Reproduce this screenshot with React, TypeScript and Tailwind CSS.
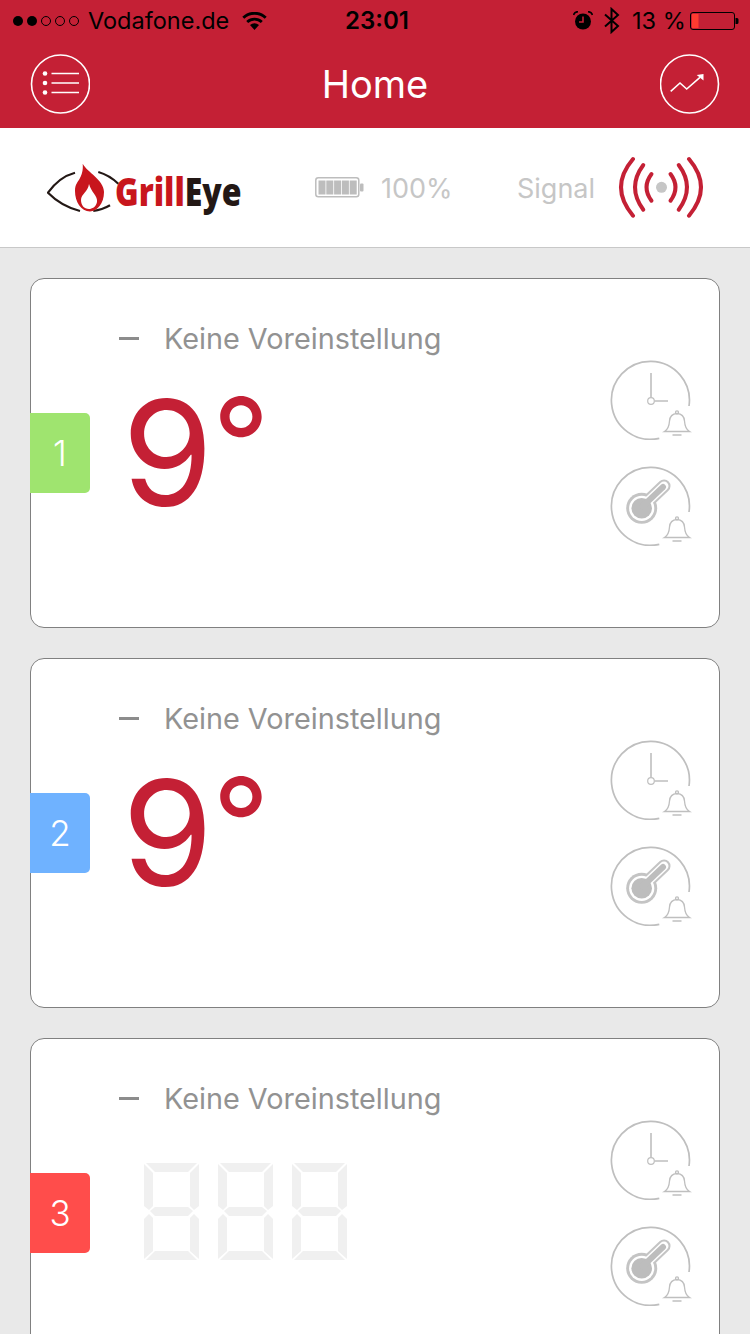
import React from "react";

const RED = "#c42035";
const GRAY = "#bdbdbd";

function Wifi() {
  return (
    <svg width="25" height="18" viewBox="0 0 25 18" className="ml-[13px]">
      <path d="M12.5 18 L8 13 A7 7 0 0 1 17 13 Z" fill="#000" />
      <path d="M5.2 10 A10.6 10.6 0 0 1 19.8 10" fill="none" stroke="#000" strokeWidth="2.8" />
      <path d="M1.3 5.8 A16 16 0 0 1 23.7 5.8" fill="none" stroke="#000" strokeWidth="2.8" />
    </svg>
  );
}

function Alarm() {
  return (
    <svg width="20" height="19" viewBox="0 0 20 19">
      <circle cx="10" cy="10.5" r="8" fill="#000" />
      <path d="M10 5.5V11H6" fill="none" stroke={RED} strokeWidth="1.6" />
      <path d="M0.5 4 Q1.5 0.8 5 0.6" fill="none" stroke="#000" strokeWidth="1.6" />
      <path d="M19.5 4 Q18.5 0.8 15 0.6" fill="none" stroke="#000" strokeWidth="1.6" />
    </svg>
  );
}

function Bluetooth() {
  return (
    <svg width="16" height="27" viewBox="0 0 16 27" className="ml-[11px]">
      <path d="M1 7.5 L14 19 L7.5 25 V2 L14 8 L1 19.5" fill="none" stroke="#000" strokeWidth="2" />
    </svg>
  );
}

function PhoneBattery() {
  return (
    <svg width="49" height="18" viewBox="0 0 49 18" className="ml-[7px]">
      <rect x="0.5" y="0.5" width="44" height="17" rx="2.5" fill="none" stroke="#000" />
      <rect x="2" y="2" width="6.5" height="14" fill="#ff3b30" />
      <path d="M45.5 6 H47 A1.5 1.5 0 0 1 48.5 7.5 V10.5 A1.5 1.5 0 0 1 47 12 H45.5 Z" fill="#000" />
    </svg>
  );
}

function StatusBar() {
  return (
    <div className="flex h-10 items-center pl-[13px] pt-[1px] text-black">
      <div className="flex w-[332px] items-center">
        <div className="flex items-center gap-[4px]">
          <span className="h-[10px] w-[10px] rounded-full bg-black" />
          <span className="h-[10px] w-[10px] rounded-full bg-black" />
          <span className="h-[10px] w-[10px] rounded-full border border-black" />
          <span className="h-[10px] w-[10px] rounded-full border border-black" />
          <span className="h-[10px] w-[10px] rounded-full border border-black" />
        </div>
        <span className="ml-[9px] text-[23.5px] leading-none">Vodafone.de</span>
        <Wifi />
      </div>
      <span className="w-[228px] text-[24px] font-semibold leading-none">23:01</span>
      <Alarm />
      <Bluetooth />
      <span className="ml-[12px] w-[51px] whitespace-nowrap text-[23.5px] leading-none">13 %</span>
      <PhoneBattery />
    </div>
  );
}

function NavBar() {
  return (
    <div className="flex h-[88px] items-center justify-between px-[30px]">
      <svg width="60" height="60" viewBox="0 0 60 60">
        <circle cx="30.5" cy="30" r="29" fill="none" stroke="#fff" strokeWidth="1.6" />
        <circle cx="15" cy="19.5" r="2.3" fill="#fff" />
        <circle cx="15" cy="29" r="2.3" fill="#fff" />
        <circle cx="15" cy="38.5" r="2.3" fill="#fff" />
        <path d="M21.5 19.5H49M21.5 29H49M21.5 38.5H49" stroke="#fff" strokeWidth="1.6" />
      </svg>
      <span className="text-[38px] leading-none text-white">Home</span>
      <svg width="60" height="60" viewBox="0 0 60 60">
        <circle cx="29.5" cy="30" r="29" fill="none" stroke="#fff" strokeWidth="1.6" />
        <path d="M10.7 37.3 L20 29 L26.7 35 L40 23.3" fill="none" stroke="#fff" strokeWidth="1.6" />
        <path d="M36.7 21 L43.5 20 L43.5 26.5 Z" fill="#fff" />
      </svg>
    </div>
  );
}

function Logo() {
  return (
    <div className="flex h-[56px] w-[193px] items-start">
      <svg width="75" height="52" viewBox="0 0 75 52" className="mt-[2px] shrink-0">
        <path d="M28 10.7 Q12 15 1 30.7 Q14 44 33 49 M51.3 10 Q62 13 71.3 21.7 M46.3 49 Q55 48 63 43.3" fill="none" stroke="#231815" strokeWidth="2.2" />
        <path d="M35.7 1.7 C40 10 57 18 57 30 C57 42 50 49 43 49.5 C34 49 28 40 28 29 C28 22 31 20 33 16 C36 10 36 6 35.7 1.7 Z" fill="#c8161d" />
        <path d="M42 22 C44 30 51 34 50 40 C49 45 45 47 42 47 C37 47 34 43 34 38 C34 32 41 30 42 22 Z" fill="#fff" />
      </svg>
      <span className="ml-[-7px] mt-[7px] origin-left scale-x-[0.82] whitespace-nowrap font-['Open_Sans',sans-serif] text-[39px] font-extrabold leading-[48px] text-[#231815]">
        <span className="text-[#c8161d]">Grill</span>Eye
      </span>
    </div>
  );
}

function DeviceBattery() {
  return (
    <svg width="49" height="21" viewBox="0 0 49 21">
      <rect x="0.8" y="0.8" width="43" height="19" rx="2.5" fill="none" stroke={GRAY} strokeWidth="1.5" />
      <rect x="3.5" y="3.5" width="7" height="14" fill={GRAY} />
      <rect x="11.3" y="3.5" width="7" height="14" fill={GRAY} />
      <rect x="19.1" y="3.5" width="7" height="14" fill={GRAY} />
      <rect x="26.9" y="3.5" width="7" height="14" fill={GRAY} />
      <rect x="34.7" y="3.5" width="7" height="14" fill={GRAY} />
      <rect x="45" y="6.5" width="3.5" height="8" rx="1" fill={GRAY} />
    </svg>
  );
}

function SignalIcon() {
  return (
    <svg width="90" height="64" viewBox="0 0 90 64">
      <circle cx="44.5" cy="31.3" r="5.5" fill="#c6c6c6" />
      <g fill="none" stroke={RED} strokeWidth="4" strokeLinecap="round">
        <path d="M34.5 18 Q24.5 31.3 34.5 44.7" />
        <path d="M26.3 9 Q9.7 31.3 26.3 53.7" />
        <path d="M16 3 Q-8 31.3 16 59.7" />
        <path d="M53.5 18 Q63.5 31.3 53.5 44.7" />
        <path d="M61.7 9 Q78.3 31.3 61.7 53.7" />
        <path d="M72 3 Q96 31.3 72 59.7" />
      </g>
    </svg>
  );
}

function Header() {
  return (
    <div className="flex h-[120px] shrink-0 items-center border-b border-[#c8c8c8] bg-white pl-[47px]">
      <Logo />
      <div className="ml-[75px]">
        <DeviceBattery />
      </div>
      <span className="ml-[17px] mt-[2px] w-[136px] text-[27px] leading-none text-[#c6c6c6]">100%</span>
      <span className="mt-[2px] text-[27px] leading-none text-[#c6c6c6]">Signal</span>
      <div className="ml-[22px]">
        <SignalIcon />
      </div>
    </div>
  );
}

function Bell() {
  return (
    <g fill="none" stroke="#bfbfbf" strokeWidth="1.3">
      <path d="M54.5 71.5 Q59 69 59.5 61 Q60 54 67 53.5 Q74 54 74.5 61 Q75 69 79.5 71.5 Z" />
      <circle cx="67" cy="52.3" r="1.5" />
      <path d="M62.5 75H71.5" strokeWidth="1.5" />
    </g>
  );
}

function ClockIcon() {
  return (
    <svg width="82" height="80" viewBox="0 0 82 80">
      <path d="M49.3 78.3 A39 39 0 1 1 79 46" fill="none" stroke="#bfbfbf" strokeWidth="1.7" />
      <path d="M41 13V37M44.5 41H58" stroke="#bfbfbf" strokeWidth="1.6" />
      <circle cx="41" cy="41" r="3.3" fill="none" stroke="#bfbfbf" strokeWidth="1.2" />
      <Bell />
    </svg>
  );
}

function ThermoIcon() {
  return (
    <svg width="82" height="80" viewBox="0 0 82 80">
      <path d="M49.3 78.3 A39 39 0 1 1 79 46" fill="none" stroke="#bfbfbf" strokeWidth="1.7" />
      <circle cx="31.7" cy="42.3" r="15.5" fill="#c4c4c4" />
      <path d="M33 40 L54 20" stroke="#c4c4c4" strokeWidth="13" strokeLinecap="round" />
      <circle cx="31.7" cy="42.3" r="12.6" fill="#fff" />
      <path d="M33 40 L54 20" stroke="#fff" strokeWidth="9" strokeLinecap="round" />
      <circle cx="31.7" cy="42.3" r="10.3" fill="#bdbdbd" />
      <path d="M33 40 L53 21" stroke="#bdbdbd" strokeWidth="6" strokeLinecap="round" />
      <Bell />
    </svg>
  );
}

function SevenSegDigit() {
  return (
    <svg width="55" height="97" viewBox="0 0 55 97" fill="#f0f0f0">
      <polygon points="2,0 53,0 44,9 11,9" />
      <polygon points="0,1 9,10 9,43 5,47 0,43" />
      <polygon points="55,1 46,10 46,43 50,47 55,43" />
      <polygon points="6,48 11,44 44,44 49,48 44,53 11,53" />
      <polygon points="0,56 5,51 9,55 9,88 0,96" />
      <polygon points="55,56 50,51 46,55 46,88 55,96" />
      <polygon points="11,88 44,88 53,97 2,97" />
    </svg>
  );
}

function Card({ n, color, reading }: { n: number; color: string; reading: boolean }) {
  return (
    <div className="relative flex h-[350px] shrink-0 justify-between rounded-[14px] border border-[#808080] bg-white">
      <div
        className="absolute left-[-1px] top-[134px] flex h-[80px] w-[60px] items-center justify-center rounded-r-[5px] text-[35px] font-light leading-none text-white"
        style={{ backgroundColor: color }}
      >
        {n}
      </div>
      <div className="pl-[87px] pt-[42px]">
        <div className="flex h-[34px] items-center">
          <span className="ml-[1px] h-[3px] w-[20px] bg-[#8c8c8c]" />
          <span className="ml-[25px] mt-[2px] text-[28.8px] leading-none text-[#929292]">Keine Voreinstellung</span>
        </div>
        {reading ? (
          <div className="ml-[4px] mt-[35px] flex items-start text-[#c42035]">
            <span className="text-[147px] leading-[125px]">9</span>
            <span className="ml-[-1px] mt-[-10px] text-[126px] leading-[125px]">°</span>
          </div>
        ) : (
          <div className="ml-[26px] mt-[48px] flex gap-[19px]">
            <SevenSegDigit />
            <SevenSegDigit />
            <SevenSegDigit />
          </div>
        )}
      </div>
      <div className="flex flex-col gap-[26px] pr-[27px] pt-[81px]">
        <ClockIcon />
        <ThermoIcon />
      </div>
    </div>
  );
}

export default function App() {
  return (
    <div className="flex h-[1334px] w-[750px] flex-col overflow-hidden bg-[#e9e9e9] font-['Inter',sans-serif]">
      <div className="shrink-0 bg-[#c42035]">
        <StatusBar />
        <NavBar />
      </div>
      <Header />
      <div className="flex flex-col gap-[30px] px-[30px] pt-[30px]">
        <Card n={1} color="#9fe46f" reading />
        <Card n={2} color="#6fb2ff" reading />
        <Card n={3} color="#ff4d4b" reading={false} />
      </div>
    </div>
  );
}
